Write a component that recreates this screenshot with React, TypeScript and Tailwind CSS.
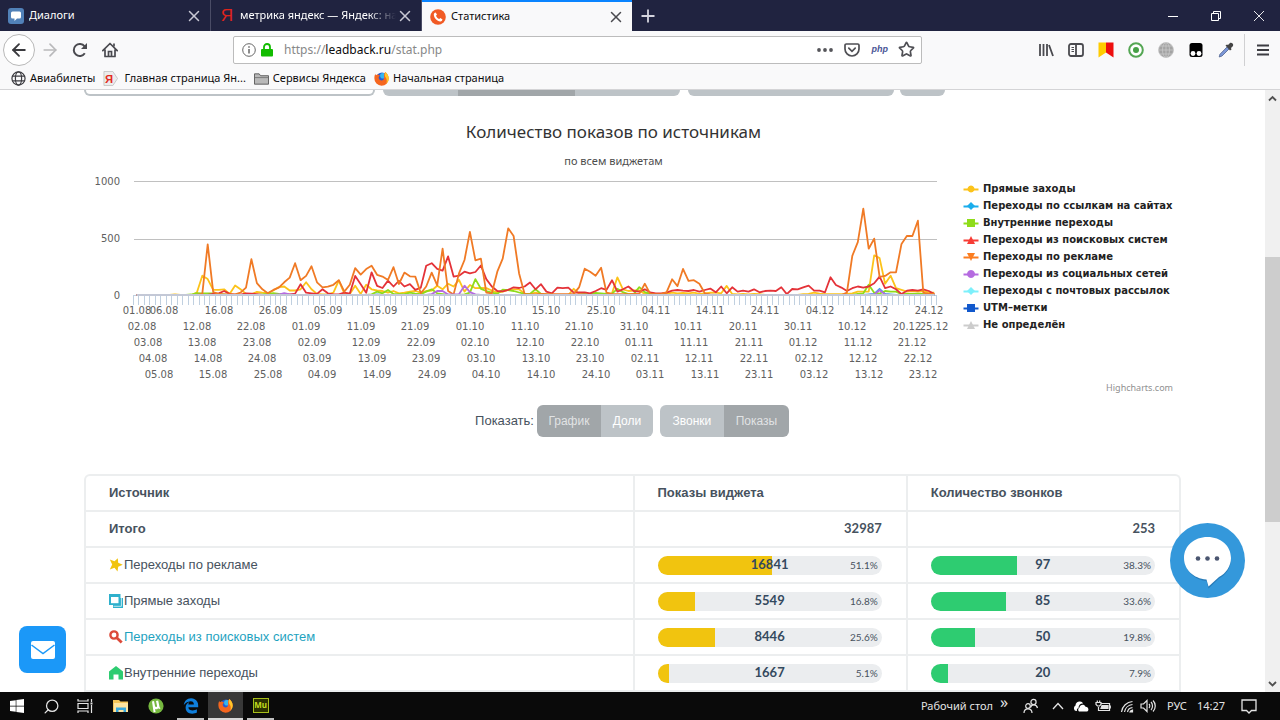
import React from "react";
import { ArrowLeft, ArrowRight, Search, Star, X } from "lucide-react";
import { FaEdgeLegacy, FaWindows } from "react-icons/fa6";

type Runs = Record<number, number[]>;

const DAYS = 147;
const PLOT_LEFT = 50;
const PLOT_WIDTH = 803;
const BASE_Y = 120;
const STEP = PLOT_WIDTH / DAYS;

function expand(runs: Runs): number[] {
  const values = new Array<number>(DAYS).fill(0);
  Object.entries(runs).forEach(([start, list]) => {
    list.forEach((v, k) => {
      const index = Number(start) + k;
      if (index < DAYS) values[index] = v;
    });
  });
  return values;
}

const centerX = (i: number) => PLOT_LEFT + STEP * (i + 0.5);

const series: { color: string; runs: Runs }[] = [
  {
    color: "#fcc31a",
    runs: {
      7: [5],
      11: [20, 170, 140, 45, 45, 50, 10, 85, 50, 10, 5, 28, 20, 15, 40, 70, 75, 40, 40, 50, 112, 50, 10, 5, 5, 20, 127, 15, 10, 82, 10, 90, 50, 40, 35, 20, 35, 15, 20, 30, 35, 20, 35, 40, 82, 50, 100, 75, 133, 30, 88, 60, 62, 60, 40, 20, 30, 45, 50, 50, 10, 10, 20, 10],
      80: [55, 10, 5, 5, 5, 5, 10, 15, 155, 50, 35, 40, 40, 10, 15, 10, 5, 10, 20, 15, 18, 15, 20, 10, 15, 20, 20, 15, 80, 10, 5, 10, 5, 10, 8],
      122: [8, 10, 20, 12, 8, 8, 8, 8, 10, 15, 30, 30, 30, 350, 325, 100, 170, 60, 45, 30, 35, 30, 35, 20, 20],
    },
  },
  { color: "#3da5e8", runs: { 44: [5], 94: [4], 134: [5, 10, 55, 10, 4] } },
  {
    color: "#8fdc1a",
    runs: {
      10: [4, 16, 15, 15, 14, 8, 4],
      23: [6, 10, 16, 10, 6],
      43: [6, 30, 15, 45, 10, 8, 8, 20, 12, 8, 30, 50, 15, 8],
      60: [6, 20, 140, 55, 35, 20, 10, 48, 42, 35, 22, 10, 10, 50, 10, 5],
      82: [8, 10, 18, 15, 10, 12, 55, 25, 8, 10, 70, 25, 10, 4],
      132: [10, 15, 90, 20, 12, 35, 30, 30, 8, 10, 10, 12, 10, 8],
    },
  },
  {
    color: "#e43238",
    runs: {
      14: [10, 15, 35, 10, 3, 3, 15, 12, 8],
      27: [4, 5, 12, 95, 20, 15, 10, 50, 15, 5, 5, 20, 12, 168, 95, 20, 200, 80, 62, 127, 75, 125, 75, 95, 45, 65, 258, 280, 230, 215, 340, 162, 170, 205, 190, 203, 260, 140, 75, 35, 32, 45, 68, 62, 75, 110, 50, 95, 30, 15, 65, 60, 65, 20, 22, 24, 15, 35, 60, 45, 130, 30, 50, 75, 35, 30, 50, 24, 15, 15, 20, 38, 44, 38, 35, 44, 30, 44, 56, 24, 75, 15, 68, 30, 38, 30, 50, 24, 35, 38, 35, 68, 8, 53, 50, 68, 82, 38, 38, 24, 156, 88, 65, 35, 60, 75, 65, 75, 103, 162, 60, 75, 50, 8, 38, 44, 38, 50, 35, 8],
    },
  },
  {
    color: "#f07a25",
    runs: {
      12: [10, 447, 25, 10, 5, 5, 5, 20, 65, 315, 105, 50, 15, 45, 65, 112, 153, 280, 130, 168, 253, 112, 68, 73, 90, 130, 30, 90, 237, 180, 228, 257, 178, 162, 133, 245, 97, 197, 165, 162, 15, 75, 197, 85, 408, 35, 5, 190, 308, 556, 305, 320, 20, 15, 205, 320, 588, 520, 190, 10, 6, 6, 10, 8, 8, 8, 8, 8, 10, 70, 232, 205, 170, 240, 20, 10, 8, 8, 8, 10, 10, 100, 10, 8, 8, 25, 138, 78, 230, 125, 130, 100, 15, 4],
      130: [20, 345, 465, 760, 408, 497, 160, 168, 200, 200, 450, 522, 520, 655, 20, 10, 10],
    },
  },
  { color: "#b56be0", runs: { 26: [4, 16, 4], 54: [8, 35, 35, 5, 4, 6, 82, 25, 5], 135: [5, 42, 5] } },
  { color: "#c3c8d6", runs: {} },
];

const points = (runs: Runs) =>
  expand(runs)
    .map((v, i) => `${centerX(i).toFixed(1)},${(BASE_Y - v * 0.1135).toFixed(1)}`)
    .join(" ");

function dateLabel(index: number) {
  const d = new Date(2018, 7, 1 + index);
  return `${String(d.getDate()).padStart(2, "0")}.${String(d.getMonth() + 1).padStart(2, "0")}`;
}

const axisLabels = Array.from({ length: DAYS }, (_, i) => i)
  .filter((i) => i === 0 || i === DAYS - 1 || (i % 10 >= 1 && i % 10 <= 5))
  .map((i) => ({ i, row: i === DAYS - 1 ? 1 : i % 5 }));

function Plot() {
  return (
    <svg viewBox="0 0 873 210" className="min-w-0 flex-1 font-['DejaVu_Sans',sans-serif]" role="img" aria-label="Количество показов по источникам">
      <path d="M50 6.5H853M50 64.5H853" stroke="#c0c0c0" strokeWidth="1" />
      <path d="M50 120.5H853" stroke="#c0d0e0" strokeWidth="1" />
      <path
        d={Array.from({ length: DAYS + 1 }, (_, i) => `M${Math.round(PLOT_LEFT + i * STEP) - 0.5} 120v10`).join("")}
        stroke="#c0d0e0"
        strokeWidth="1"
      />
      {series.map((s) => (
        <polyline key={s.color} points={points(s.runs)} fill="none" stroke={s.color} strokeWidth="1.8" strokeLinejoin="round" />
      ))}
      <g fontSize="10" fill="#606060" textAnchor="end">
        <text x="36" y="10">1000</text>
        <text x="36" y="67">500</text>
        <text x="36" y="124">0</text>
      </g>
      <g fontSize="10" fill="#606060" textAnchor="middle">
        {axisLabels.map(({ i, row }) => (
          <text key={i} x={Math.round(centerX(i))} y={139 + row * 16}>
            {dateLabel(i)}
          </text>
        ))}
      </g>
    </svg>
  );
}

const legend = [
  { label: "Прямые заходы", color: "#fcc31a", d: "M8 4.500a3.500 3.500 0 1 0 .01 0z" },
  { label: "Переходы по ссылкам на сайтах", color: "#1aadec", d: "M8 4l4 4-4 4-4-4z" },
  { label: "Внутренние переходы", color: "#8fdc1a", d: "M4 4h8v8H4z" },
  { label: "Переходы из поисковых систем", color: "#f73c35", d: "M8 4l4 8H4z" },
  { label: "Переходы по рекламе", color: "#fb7d20", d: "M4 4h8l-4 8z" },
  { label: "Переходы из социальных сетей", color: "#b56be0", d: "M8 4a4 4 0 1 0 .01 0z" },
  { label: "Переходы с почтовых рассылок", color: "#7df0fb", d: "M8 4l4 4-4 4-4-4z" },
  { label: "UTM–метки", color: "#1158cc", d: "M4 4h8v8H4z" },
  { label: "Не определён", color: "#cccccc", d: "M8 4l4 8H4z" },
];

function Legend() {
  return (
    <div className="flex w-[224px] shrink-0 flex-col pt-[5px] pl-1.5 font-['DejaVu_Sans',sans-serif]">
      <ul>
        {legend.map((item) => (
          <li key={item.label} className="flex h-[17px] items-center gap-1 text-[10px] font-bold whitespace-nowrap text-[#222]">
            <svg viewBox="0 0 16 16" className="size-4 shrink-0">
              <path d="M.5 8.500h15" stroke={item.color} strokeWidth="2" />
              <path d={item.d} fill={item.color} />
            </svg>
            {item.label}
          </li>
        ))}
      </ul>
      <a href="#highcharts" className="mt-[49px] mr-2 self-end font-['Noto_Sans',sans-serif] text-[9px] leading-3 text-[#909090]">
        Highcharts.com
      </a>
    </div>
  );
}

function Tab({ title, icon, active, fade }: { title: string; icon: React.ReactNode; active?: boolean; fade?: boolean }) {
  return (
    <div
      className={
        active
          ? "flex w-[210px] items-center border-t-2 border-[#0a84ff] bg-[#f9f9fa] pr-[7px] pl-2 text-[#0c0c0d]"
          : "flex w-[211px] items-center border-r border-[#4a4c66] pr-[7px] pl-2 text-white"
      }
    >
      <button type="button" className="flex min-w-0 flex-1 items-center gap-[5px] text-left text-[11px]">
        {icon}
        <span className={fade ? "overflow-hidden whitespace-nowrap [mask-image:linear-gradient(to_right,black_82%,transparent)]" : "truncate"}>{title}</span>
      </button>
      <button type="button" aria-label="Закрыть вкладку">
        <X size={18} strokeWidth={2} className={active ? "text-[#4a4a4f]" : "text-[#c8c8d4]"} />
      </button>
    </div>
  );
}

function ToolButton({ label, children }: { label: string; children: React.ReactNode }) {
  return (
    <button type="button" aria-label={label} className="flex h-8 w-[30px] items-center justify-center text-[#4a4a4f]">
      {children}
    </button>
  );
}

function BrowserChrome() {
  return (
    <header className="shrink-0 font-['Noto_Sans',sans-serif]">
      <div className="flex h-[31px] bg-[#202340]">
        <Tab
          title="Диалоги"
          icon={
            <svg viewBox="0 0 16 16" className="size-4 shrink-0">
              <rect width="16" height="16" rx="3" fill="#5181b8" />
              <path d="M4.500 3.500h7a1.500 1.500 0 0 1 1.500 1.500v4a1.500 1.500 0 0 1-1.500 1.500H9L6.500 13v-2.500h-2A1.500 1.500 0 0 1 3 9V5a1.500 1.500 0 0 1 1.500-1.500z" fill="#fff" />
            </svg>
          }
        />
        <Tab
          title="метрика яндекс — Яндекс: наш"
          fade
          icon={<span className="w-4 shrink-0 text-center font-['Liberation_Sans_Narrow','Liberation_Sans',sans-serif] text-[17px] leading-4 text-[#e0241c]">Я</span>}
        />
        <Tab
          title="Статистика"
          active
          icon={
            <svg viewBox="0 0 16 16" className="size-4 shrink-0">
              <circle cx="8" cy="8" r="7.800" fill="#f15a24" />
              <path d="M5.600 3.400L7 5.600l-1 1.100c.5 1.400 1.700 2.700 3.200 3.400l1.200-1 2.100 1.400c-.3 1.300-1.200 2-2.300 1.900C7 12 4.100 9 3.800 5.700c0-1.100.7-2 1.800-2.300z" fill="#fff" />
            </svg>
          }
        />
        <button type="button" aria-label="Новая вкладка" className="flex w-8 items-center justify-center">
          <svg viewBox="0 0 14 14" className="size-3.5"><path d="M7 .5v13M.5 7h13" stroke="#d4d4de" strokeWidth="1.800" /></svg>
        </button>
        <div className="ml-auto flex text-white">
          <button type="button" aria-label="Свернуть" className="flex w-[43px] items-center justify-center">
            <svg viewBox="0 0 10 10" className="size-2.5"><path d="M0 5.500h10" stroke="currentColor" /></svg>
          </button>
          <button type="button" aria-label="Восстановить" className="flex w-[43px] items-center justify-center">
            <svg viewBox="0 0 10 10" className="size-2.5" fill="none" stroke="currentColor"><path d="M.5 2.500h7v7h-7zM2.500 2.500v-2h7v7h-2" /></svg>
          </button>
          <button type="button" aria-label="Закрыть" className="flex w-[43px] items-center justify-center">
            <svg viewBox="0 0 10 10" className="size-2.5"><path d="M0 0l10 10M10 0L0 10" stroke="currentColor" strokeWidth=".9" /></svg>
          </button>
        </div>
      </div>

      <div className="flex h-[37px] items-center bg-[#f9f9fa]">
        <button type="button" aria-label="Назад" className="ml-[3px] flex size-8 items-center justify-center rounded-full border border-[#b8b8b8] bg-white text-[#3a3a3e]">
          <ArrowLeft size={20} strokeWidth={2.2} />
        </button>
        <button type="button" aria-label="Вперёд" className="flex h-8 w-[30px] items-center justify-center text-[#b9b9bb]">
          <ArrowRight size={20} strokeWidth={2} />
        </button>
        <ToolButton label="Обновить">
          <svg viewBox="0 0 16 16" className="size-4" fill="none" stroke="currentColor" strokeWidth="2">
            <path d="M12.800 11.300A6 6 0 1 1 12.600 4.400" />
            <path d="M15 1v6H9z" fill="currentColor" stroke="none" />
          </svg>
        </ToolButton>
        <ToolButton label="Домой">
          <svg viewBox="0 0 16 16" className="size-4" fill="none" stroke="currentColor" strokeWidth="1.700">
            <path d="M.8 8.600L8 1.500l7.200 7.100M3 7.500V14.500h10V7.500" strokeLinecap="round" strokeLinejoin="round" />
            <path d="M6.500 14V9.500h3V14M12 1.500v3" />
          </svg>
        </ToolButton>
        <div className="mr-[109px] ml-[108px] flex h-7 flex-1 items-center rounded-xs border border-[#bcbcbc] bg-white pr-1.5 pl-2">
          <svg viewBox="0 0 14 14" className="size-3.5" fill="none" stroke="#666"><circle cx="7" cy="7" r="6.300" /><path d="M7 6v4.500M7 3.300v1.400" strokeWidth="1.500" /></svg>
          <svg viewBox="0 0 12 14" className="ml-[5px] h-3.5 w-3"><path d="M3 7V4a3 3 0 0 1 6 0v3" fill="none" stroke="#12bc00" strokeWidth="1.800" /><rect y="6" width="12" height="7.500" rx="1" fill="#12bc00" /></svg>
          <div className="relative ml-[11px] h-5 flex-1 text-[12px] leading-5">
            <input aria-label="Адрес" defaultValue="https://leadback.ru/stat.php" className="w-full bg-transparent text-transparent outline-none" />
            <span aria-hidden="true" className="pointer-events-none absolute inset-0 text-[#888]">
              https://<span className="text-[#0c0c0d]">leadback.ru</span>/stat.php
            </span>
          </div>
          <button type="button" aria-label="Действия" className="mr-[11px]">
            <svg viewBox="0 0 16 4" className="h-1 w-4" fill="#55555a"><circle cx="2" cy="2" r="1.900" /><circle cx="8" cy="2" r="1.900" /><circle cx="14" cy="2" r="1.900" /></svg>
          </button>
          <button type="button" aria-label="Pocket" className="mr-3">
            <svg viewBox="0 0 16 14" className="h-3.5 w-4" fill="none" stroke="#4f4f54" strokeWidth="1.700" strokeLinecap="round"><path d="M2.300 1h11.400A1.300 1.300 0 0 1 15 2.300V6A7 7 0 0 1 1 6V2.300A1.300 1.300 0 0 1 2.300 1z" /><path d="M4.800 5.200L8 8.300l3.200-3.100" /></svg>
          </button>
          <button type="button" className="mr-2.5 font-['Liberation_Sans',sans-serif] text-[9px] font-bold text-[#4a5696] italic">php</button>
          <button type="button" aria-label="Добавить в закладки"><Star size={17} strokeWidth={2.4} className="text-[#4f4f54]" /></button>
        </div>
        <ToolButton label="Библиотека">
          <svg viewBox="0 0 16 16" className="size-4" stroke="currentColor" strokeWidth="1.800"><path d="M2 2v12M5.500 2v12M9 2v12M11 3l4 11" /></svg>
        </ToolButton>
        <ToolButton label="Боковая панель">
          <svg viewBox="0 0 16 16" className="size-4" fill="none" stroke="currentColor" strokeWidth="1.800"><rect x="1" y="2" width="14" height="12" rx="2" /><path d="M8 2v12" /><path d="M3.500 5.500h2.500M3.500 7.500h2.500M3.500 9.500h2.500" strokeWidth="1" /></svg>
        </ToolButton>
        <ToolButton label="Закладки Яндекса">
          <svg viewBox="0 0 16 16" className="size-4"><path d="M.5 .5H8v10L.5 15.500z" fill="#ffcc00" /><path d="M8 .5h7.500v15L8 10.500z" fill="#ee0f0f" /></svg>
        </ToolButton>
        <ToolButton label="Индикатор">
          <svg viewBox="0 0 16 16" className="size-4"><circle cx="8" cy="8" r="6.800" fill="#fff" stroke="#54a653" strokeWidth="2" /><circle cx="8" cy="8" r="3" fill="#46a046" /></svg>
        </ToolButton>
        <ToolButton label="Прокси">
          <svg viewBox="0 0 16 16" className="size-4" fill="none" stroke="#c9c9c9" strokeWidth=".8"><circle cx="8" cy="8" r="7.500" fill="#a3a3a3" /><ellipse cx="8" cy="8" rx="3.500" ry="7.500" /><path d="M8 .5v15M.5 8h15M2 4h12M2 12h12" /></svg>
        </ToolButton>
        <ToolButton label="Расширение">
          <svg viewBox="0 0 16 16" className="size-4"><rect x="1.500" y="1" width="13" height="14" rx="2.500" fill="#000" /><circle cx="5" cy="11.500" r="2.400" fill="#fff" /><circle cx="11" cy="11.500" r="2.400" fill="#fff" /></svg>
        </ToolButton>
        <ToolButton label="Пипетка">
          <svg viewBox="0 0 16 16" className="size-4"><path d="M9.500 4.500l2 2L4 14l-2.800 1L2 12.200z" fill="#7c97d8" stroke="#52658f" strokeWidth=".8" /><path d="M7.500 3.500l1.500-1 1 .5L12 1c1.500-1 4 1 3 3l-2 2 .5 1.500-1.500 1z" fill="#444" /></svg>
        </ToolButton>
        <div className="ml-[3px] h-8 w-px bg-[#d0d0d2]" />
        <button type="button" aria-label="Меню" className="flex h-8 w-[35px] items-center justify-center">
          <svg viewBox="0 0 12 12" className="size-3" stroke="#3d3d42" strokeWidth="1.800"><path d="M0 1.500h12M0 6h12M0 10.500h12" /></svg>
        </button>
      </div>

      <nav className="flex h-[22px] items-center gap-2 border-b border-[#d4d4d6] bg-[#f9f9fa] pl-[11px] text-[11px] text-[#0c0c0d]">
        <a href="#avia" className="flex items-center gap-1">
          <svg viewBox="0 0 16 16" className="size-[15px]" fill="none" stroke="#3d3d42" strokeWidth="1.300"><circle cx="8" cy="8" r="7" /><ellipse cx="8" cy="8" rx="3.300" ry="7" /><path d="M1.500 5.500h13M1.500 10.500h13" /></svg>
          Авиабилеты
        </a>
        <a href="#yandex" className="flex items-center gap-1.5">
          <svg viewBox="0 0 16 16" className="size-[15px]"><path d="M1 .5h9.500L15.500 8l-5 7.500H1z" fill="#ececec" stroke="#bbb" strokeWidth=".8" /><text x="2" y="12.500" fontSize="12" fontWeight="700" fill="#e32a22" className="font-['Liberation_Sans',sans-serif]">Я</text></svg>
          Главная страница Ян...
        </a>
        <a href="#services" className="flex items-center gap-1">
          <svg viewBox="0 0 16 14" className="h-3.5 w-[15px]"><path d="M.5 1.500h5l1.500 2h8.500V12.500H.5z" fill="#b9b9b9" stroke="#5b5b5b" /><path d="M1 5.500h14" stroke="#5b5b5b" strokeWidth=".7" /></svg>
          Сервисы Яндекса
        </a>
        <a href="#start" className="flex items-center gap-1">
          <FirefoxIcon />
          Начальная страница
        </a>
      </nav>
    </header>
  );
}

function FirefoxIcon() {
  return (
    <svg viewBox="0 0 16 16" className="size-[15px]">
      <circle cx="8.500" cy="7.500" r="6" fill="#2a5bd0" />
      <circle cx="9.500" cy="5" r="3" fill="#35b6f0" />
      <path d="M1.500 3c0 .8.300 1.300.6 1.600L4 3.500C4.500 4.200 5.500 4.500 6.500 4.600 6 5.600 5 6 5 7.200c0 1.700 1.500 2.800 3.200 2.800 2.400 0 3-2.500 2.500-4.300C10.300 4 11 2.500 12 1c2 1.700 3.700 4 3.700 7A7.600 7.600 0 0 1 8 15.700 7.600 7.600 0 0 1 .4 8c0-2 .3-3.700 1.100-5z" fill="#f5661f" />
      <path d="M12 1c2 1.700 3.700 4 3.700 7 0 2-1 4-2.500 5.500.8-3 .5-5-.7-6.500C11.300 5.500 11 3 12 1z" fill="#ffc629" />
    </svg>
  );
}

const segment = "h-8 text-[12px]";

function Switcher() {
  return (
    <div className="mt-[11px] flex items-center justify-center pr-px font-['Liberation_Sans',sans-serif]">
      <span className="mr-[3px] text-[13px] text-[#47525e]">Показать:</span>
      <div className="mr-[7px] flex overflow-hidden rounded-md">
        <button type="button" className={`${segment} w-16 bg-[#a1a6a9] text-white/70`}>График</button>
        <button type="button" className={`${segment} w-[52px] bg-[#bdc3c7] text-white`}>Доли</button>
      </div>
      <div className="flex overflow-hidden rounded-md">
        <button type="button" className={`${segment} w-16 bg-[#bdc3c7] text-white`}>Звонки</button>
        <button type="button" className={`${segment} w-[65px] bg-[#a1a6a9] text-white/70`}>Показы</button>
      </div>
    </div>
  );
}

function Meter({ value, share, fill }: { value: number; share: number; fill: string }) {
  return (
    <div className="relative h-[19px] overflow-hidden rounded-full bg-[#ebedef] font-['Lato',sans-serif]">
      <div className={`h-full ${fill}`} style={{ width: `${share}%` }} />
      <div className="absolute inset-0 flex items-center justify-center text-[13px] font-bold text-[#34495e]">{value}</div>
      <div className="absolute inset-y-0 right-1 flex items-center text-[10px]">{share.toFixed(1)}%</div>
    </div>
  );
}

const rowIcons = {
  star: <path d="M.8 1.500l4.700 1.700L8.800.2l.4 4.600 4.500 2-4.500 1.900L8.500 13.500 5.500 9.700.8 11.500l2.400-5z" fill="#f1c40f" />,
  windows: <g><path d="M4 4h10v10H4z" fill="#2fb0cc" /><path d="M0 0h11.500v11H0z" fill="#2fb0cc" /><path d="M2 3h7.500v6.200H2z" fill="#fff" /><path d="M4.500 12.300h7.900V4" fill="none" stroke="#fff" strokeWidth=".7" /></g>,
  search: <g fill="none" stroke="#dc4a3a"><circle cx="5" cy="5" r="3.600" strokeWidth="2.400" /><path d="M7.700 7.700l5 4.800" strokeWidth="2.800" /></g>,
  home: <path d="M7 0L14 5.500v8H9.500V8.500h-5v5H0v-8z" fill="#2ecc71" />,
};

const rows = [
  { icon: rowIcons.star, name: "Переходы по рекламе", shows: 16841, showShare: 51.1, calls: 97, callShare: 38.3 },
  { icon: rowIcons.windows, name: "Прямые заходы", shows: 5549, showShare: 16.8, calls: 85, callShare: 33.6 },
  { icon: rowIcons.search, name: "Переходы из поисковых систем", shows: 8446, showShare: 25.6, calls: 50, callShare: 19.8, link: true },
  { icon: rowIcons.home, name: "Внутренние переходы", shows: 1667, showShare: 5.1, calls: 20, callShare: 7.9 },
];

const firstCell = "h-9 border-b-2 border-[#eceeef] px-[23px] text-left";
const nextCell = "h-9 border-b-2 border-l-2 border-[#eceeef] pr-6 pl-[23px] text-left";

function SourceTable() {
  return (
    <div className="mt-[37px] overflow-hidden rounded-t-md border-2 border-b-0 border-[#eceeef] font-['Liberation_Sans',sans-serif] text-[13px] text-[#47525e]">
      <table className="w-full table-fixed border-separate border-spacing-0">
        <thead>
          <tr>
            <th className={`${firstCell} w-1/2`}>Источник</th>
            <th className={nextCell}>Показы виджета</th>
            <th className={nextCell}>Количество звонков</th>
          </tr>
        </thead>
        <tbody>
          <tr className="font-bold">
            <td className={firstCell}>Итого</td>
            <td className={nextCell}><div className="text-right font-['Lato',sans-serif]">32987</div></td>
            <td className={nextCell}><div className="text-right font-['Lato',sans-serif]">253</div></td>
          </tr>
          {rows.map((r) => (
            <tr key={r.name}>
              <td className={firstCell}>
                <div className="flex items-center gap-px">
                  <svg viewBox="0 0 14 14" className="size-3.5">{r.icon}</svg>
                  {r.link ? <a href="#search" className="text-[#1fa3bf]">{r.name}</a> : <span>{r.name}</span>}
                </div>
              </td>
              <td className={nextCell}><Meter value={r.shows} share={r.showShare} fill="bg-[#f1c40f]" /></td>
              <td className={nextCell}><Meter value={r.calls} share={r.callShare} fill="bg-[#2ecc71]" /></td>
            </tr>
          ))}
        </tbody>
      </table>
    </div>
  );
}

function FilterEdge() {
  return (
    <div className="flex h-1.5 items-stretch">
      <button type="button" aria-label="Период" className="mr-2 w-[291px] rounded-b-md border-2 border-t-0 border-[#bdc3c7] bg-white" />
      <div className="mr-2 flex w-[297px] overflow-hidden rounded-b-md">
        <button type="button" aria-label="День" className="w-[75px] bg-[#bdc3c7]" />
        <button type="button" aria-label="Неделя" className="w-[117px] bg-[#a1a6a9]" />
        <button type="button" aria-label="Месяц" className="flex-1 bg-[#bdc3c7]" />
      </div>
      <button type="button" aria-label="Виджет" className="mr-1.5 w-[206px] rounded-b-md bg-[#bdc3c7]" />
      <button type="button" aria-label="Экспорт" className="w-[45px] rounded-b-md bg-[#bdc3c7]" />
    </div>
  );
}

function Scrollbar() {
  return (
    <div className="flex w-[15px] shrink-0 flex-col items-center bg-[#f0f0f0]">
      <svg viewBox="0 0 15 17" className="h-[17px] w-[15px]" fill="none" stroke="#505050" strokeWidth="1.800"><path d="M4 10.500L7.500 7l3.500 3.500" /></svg>
      <div className="w-full grow-[150]" />
      <div className="w-full grow-[265] bg-[#cdcdcd]" />
      <div className="w-full grow-[153]" />
      <svg viewBox="0 0 15 17" className="h-[17px] w-[15px]" fill="none" stroke="#505050" strokeWidth="1.800"><path d="M4 7l3.500 3.500L11 7" /></svg>
    </div>
  );
}

const task = "flex w-[35px] items-center justify-center border-b-2 border-transparent pt-px";

function Taskbar() {
  return (
    <footer className="flex h-7 shrink-0 bg-[#0a0a0a] font-['Noto_Sans',sans-serif] text-[11px] text-[#e4e4e4]">
      <button type="button" aria-label="Пуск" className="flex w-[34px] items-center justify-center text-white"><FaWindows size={16} /></button>
      <button type="button" aria-label="Поиск" className="flex w-[34px] items-center justify-center"><Search size={17} strokeWidth={1.8} className="-scale-x-100" /></button>
      <button type="button" aria-label="Представление задач" className="mr-px flex w-[34px] items-center justify-center">
        <svg viewBox="0 0 16 16" className="size-4" fill="none" stroke="currentColor" strokeWidth="1.200"><path d="M1 1v2h10V1M1 15v-2h10v2M1 5.500h10v5H1zM14.500 1v3M14.500 7v8" /><path d="M13.500 4.500h2v2h-2z" fill="currentColor" stroke="none" /></svg>
      </button>
      <button type="button" aria-label="Проводник" className={task}>
        <svg viewBox="0 0 16 16" className="size-4"><path d="M0 2h6l1.500 1.500H15V14H0z" fill="#f2c458" /><path d="M1 5h14v9H1z" fill="#fbe3a0" /><path d="M3 14V9.500h10V14h-2.500v-2h-5v2z" fill="#38a7dc" /></svg>
      </button>
      <button type="button" aria-label="uTorrent" className={task}>
        <svg viewBox="0 0 16 16" className="size-4"><circle cx="8" cy="8" r="7.600" fill="#76b83f" /><path d="M4 3.500l2-.5 1 5c.3 1.500 2.300 1.200 2-.3L8 3l2.200-.4 1.400 6.600 1 1-1.400.8-1-.8c-1 1.300-2.500 1.400-3.200.8l.6 3-2 .3z" fill="#fff" /></svg>
      </button>
      <button type="button" aria-label="Edge" className="mx-1 flex w-[27px] items-center justify-center border-b-2 border-[#c0c0c0] pt-px text-[#0f7fdc]"><FaEdgeLegacy size={16} /></button>
      <button type="button" aria-label="Firefox" className="flex w-[35px] items-center justify-center border-b-2 border-[#d8d8d8] bg-[#383838] pt-px"><FirefoxIcon /></button>
      <button type="button" aria-label="Muse" className="mx-1 flex w-[27px] items-center justify-center border-b-2 border-[#c0c0c0]">
        <span className="flex h-[15px] w-4 items-center justify-center border border-[#a8bf1a] bg-[#2c3200] text-[8px] font-bold text-[#c3dc1e]">Mu</span>
      </button>
      <div className="ml-auto flex items-center">
        <span className="mr-[7px]">Рабочий стол</span>
        <span className="mr-[15px] pb-2 text-[16px] leading-4">»</span>
        <svg viewBox="0 0 16 16" className="mr-[13px] size-4" fill="none" stroke="currentColor" strokeWidth="1.200"><circle cx="10.500" cy="4" r="2.600" /><path d="M7.500 9.500c1-3.500 6-3.500 7 .500" /><circle cx="5" cy="8" r="2.300" /><path d="M1 15c0-5.500 8-5.500 8 0" /></svg>
        <svg viewBox="0 0 12 8" className="mr-[9px] h-2 w-3" fill="none" stroke="currentColor" strokeWidth="1.300"><path d="M1 7l5-5.500L11 7" /></svg>
        <svg viewBox="0 0 16 12" className="mr-1.5 h-3 w-4" fill="#fff"><path d="M3 11a3 3 0 0 1-.5-5.500A4 4 0 0 1 7 1.500c1.500 0 2.500.8 3 2C7 3.500 5.500 5.500 5.500 8 4 8.500 3.500 10 4 11z" /><path d="M6 11.500a2.500 2.500 0 0 1 .5-4c.5-3 4.500-4 6-.8 3 0 4 3.800 1.500 4.800z" /></svg>
        <svg viewBox="0 0 16 12" className="mr-[9px] h-3 w-4" fill="none" stroke="currentColor" strokeWidth="1.200"><path d="M6 3.500h8.500v7H3.500V7" /><path d="M7 5.500h6v3H6z" fill="currentColor" /><path d="M1 2.500h5v2L4.500 6h-2L1 4.500zM2.300.5v2M4.700.5v2" /><path d="M15.300 5.500v3" /></svg>
        <svg viewBox="0 0 14 14" className="mr-1.5 size-3.5" fill="none" stroke="currentColor" strokeWidth="1.200"><path d="M1.500 13A12 12 0 0 1 12.500 2.500M4.500 13a9 9 0 0 1 8-7.500M7.500 13A5.500 5.500 0 0 1 12.500 8.700" /><path d="M10 13a3 3 0 0 1 2.500-2v2z" fill="currentColor" /></svg>
        <svg viewBox="0 0 16 14" className="mr-[11px] h-3.5 w-4" fill="none" stroke="currentColor" strokeWidth="1.200"><path d="M1 5h2.500L7 1.500v11L3.500 9H1zM9 5c1 1 1 3 0 4M11 3c2 2 2 6 0 8M13 1.500c3 3 3 8 0 11" /></svg>
        <span className="mr-2.5">РУС</span>
        <time className="mr-4">14:27</time>
        <svg viewBox="0 0 16 16" className="mr-[23px] size-4" fill="none" stroke="currentColor" strokeWidth="1.300"><path d="M1 2h14v10.500h-4.500L8 15l-2.500-2.500H1z" /></svg>
      </div>
    </footer>
  );
}

export default function App() {
  return (
    <div className="flex h-screen flex-col overflow-hidden bg-white">
      <BrowserChrome />
      <div className="relative flex min-h-0 flex-1">
        <main className="min-w-0 flex-1 overflow-hidden">
          <div className="mx-auto max-w-[1097px]">
            <FilterEdge />
            <div className="pt-6 pr-[38px] text-center font-['Noto_Sans',sans-serif]">
              <h1 className="text-[17px] leading-6 text-[#333]">Количество показов по источникам</h1>
              <p className="mt-2.5 text-[11px] leading-[14px] text-[#4d4d4d]">по всем виджетам</p>
            </div>
            <div className="mt-[7px] flex items-start">
              <Plot />
              <Legend />
            </div>
            <Switcher />
            <SourceTable />
          </div>
        </main>
        <Scrollbar />
        <button type="button" aria-label="Написать" className="absolute bottom-[19px] left-[19px] flex size-[47px] items-center justify-center rounded-lg bg-[#1b98f8]">
          <svg viewBox="0 0 24 18" className="h-[18px] w-6"><rect width="24" height="18" rx="2" fill="#fff" /><path d="M.5 4L12 12.500 23.500 4" fill="none" stroke="#1b98f8" strokeWidth="1.500" /></svg>
        </button>
        <button type="button" aria-label="Чат" className="absolute right-[35px] bottom-[94px] size-[75px]">
          <svg viewBox="0 0 75 75">
            <circle cx="37.500" cy="37.500" r="37.500" fill="#3498db" />
            <path d="M37.500 16C24 16 14.500 24 14.500 35.500S24 57 36.500 58l2 7.500L49 55.500c7-3.500 12-11 12-19C61 24 51 16 37.500 16z" fill="#2471ab" opacity=".7" />
            <path d="M37.500 14C24 14 14 23 14 35c0 11.500 9.500 20.500 22.500 21.500l2 7L49 54c7-3.500 12-11 12-19 0-12-10-21-23.500-21z" fill="#fff" />
            <g fill="#4a5570"><circle cx="28" cy="35.500" r="2.300" /><circle cx="37.500" cy="35.500" r="2.300" /><circle cx="47" cy="35.500" r="2.300" /></g>
          </svg>
        </button>
      </div>
      <Taskbar />
    </div>
  );
}
